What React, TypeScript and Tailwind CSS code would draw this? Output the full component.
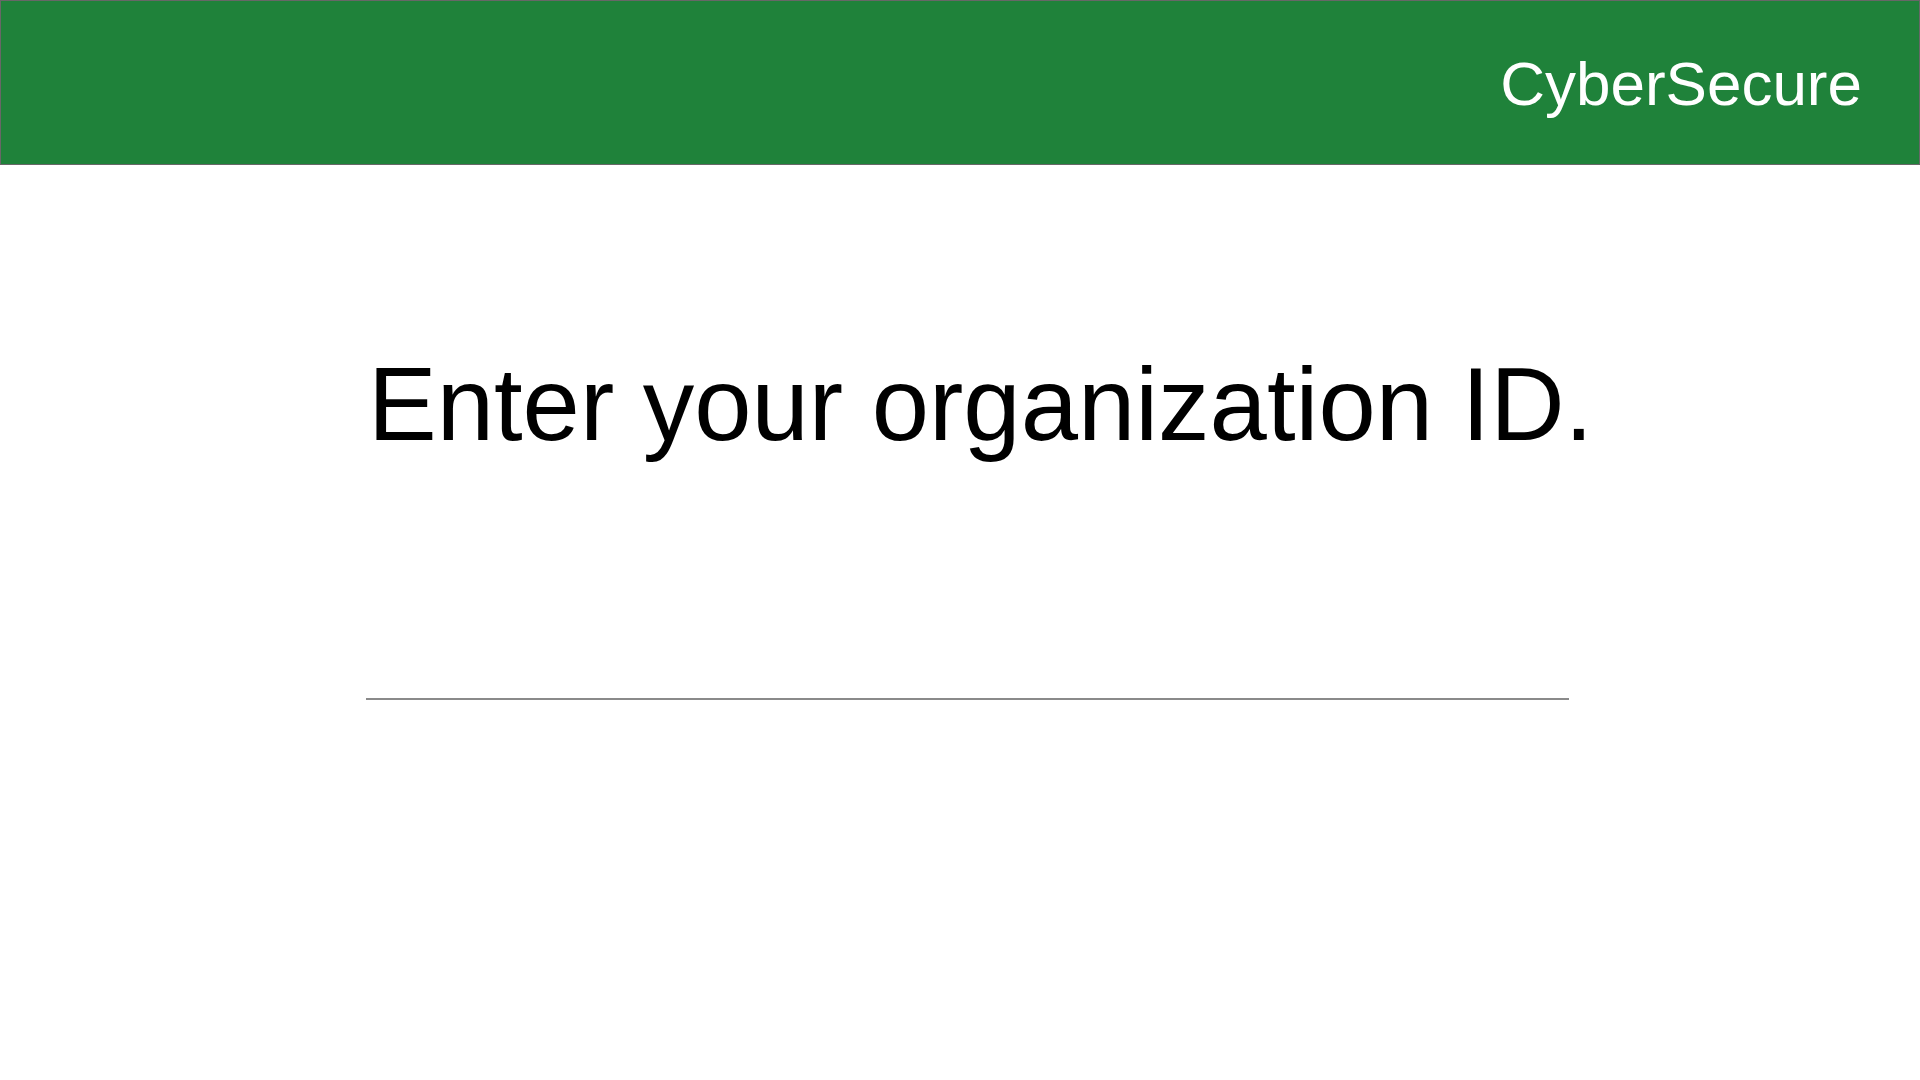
export default function App() {
  return (
    <div className="min-h-screen w-full bg-white" style={{ fontFamily: '"Liberation Sans", Arial, sans-serif' }}>
      {/* Header bar */}
      <header className="flex h-[165px] justify-end border border-[#676767] bg-[#1f823a] pr-[57px] pt-[52px]">
        <span className="text-[62px] leading-none text-white">CyberSecure</span>
      </header>

      {/* Prompt + input line */}
      <main className="pl-[366px] pt-[188px]">
        <h1 className="pl-[2px] text-[103px] leading-none font-normal text-black">Enter your organization ID.</h1>
        <div className="mt-[242px] h-[2px] w-[1203px] bg-[#8a8a8a]" />
      </main>
    </div>
  );
}
